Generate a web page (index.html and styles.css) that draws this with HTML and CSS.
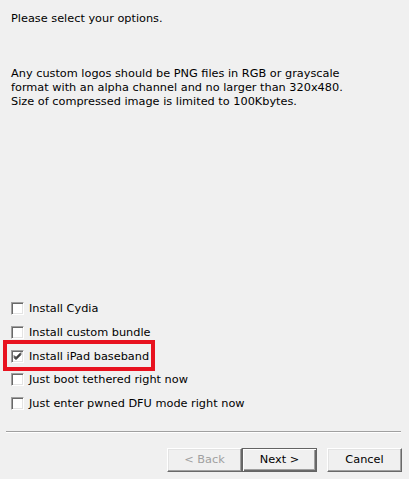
FILE: index.html
```html
<!DOCTYPE html>
<html>
<head>
<meta charset="utf-8">
<link rel="stylesheet" href="styles.css">
</head>
<body>
<div class="wizard">
  <div class="content">
    <p class="title">Please select your options.</p>
    <p class="info">Any custom logos should be PNG files in RGB or grayscale<br>format with an alpha channel and no larger than 320x480.<br>Size of compressed image is limited to 100Kbytes.</p>
    <div class="options">
      <div class="row"><span class="box"></span><span class="label">Install Cydia</span></div>
      <div class="row"><span class="box"></span><span class="label">Install custom bundle</span></div>
      <div class="row highlight"><span class="box checked"><svg width="9" height="9" viewBox="0 0 9 9"><path d="M1 3.5 L3 5.5 L8 0.5 M1 4.5 L3 6.5 L8 1.5 M1 5.5 L3 7.5 L8 2.5" fill="none" stroke="#000" stroke-width="1"/></svg></span><span class="label">Install iPad baseband</span></div>
      <div class="row"><span class="box"></span><span class="label">Just boot tethered right now</span></div>
      <div class="row"><span class="box"></span><span class="label">Just enter pwned DFU mode right now</span></div>
    </div>
  </div>
  <div class="separator"></div>
  <div class="buttons">
    <div class="btn disabled">&lt; Back</div>
    <div class="btn default">Next &gt;</div>
    <div class="btn cancel">Cancel</div>
  </div>
</div>
</body>
</html>
```
FILE: styles.css
```css
html, body {
  margin: 0;
  padding: 0;
  background: #f0f0f0;
}
.wizard {
  width: 409px;
  height: 479px;
  font-family: "DejaVu Sans", Verdana, sans-serif;
  font-size: 11.3px;
  color: #000;
  overflow: hidden;
}
.content {
  padding-left: 11px;
}
.title {
  margin: 0;
  padding-top: 12px;
  line-height: 14px;
}
.info {
  margin: 41px 0 0 0;
  line-height: 14px;
}
.options {
  margin-top: 188px;
}
.row {
  position: relative;
  width: fit-content;
  height: 23.75px;
  display: flex;
  align-items: flex-start;
}
.box {
  box-sizing: border-box;
  width: 13px;
  height: 13px;
  margin-top: 5px;
  background: #fff;
  border: 1px solid;
  border-color: #a0a0a0 #ffffff #ffffff #a0a0a0;
  box-shadow: inset 1px 1px #696969, inset -1px -1px #e3e3e3;
  display: flex;
  align-items: center;
  justify-content: center;
}
.box svg {
  display: block;
}
.label {
  margin-left: 5px;
  line-height: 13px;
  margin-top: 5px;
  white-space: nowrap;
}
.highlight::after {
  content: "";
  position: absolute;
  left: -8px;
  right: -6px;
  top: -5px;
  height: 31px;
  box-sizing: border-box;
  border: 4px solid #e8121f;
}
.separator {
  margin: 15px 8px 0 6px;
  border-top: 1px solid #a0a0a0;
  border-bottom: 1px solid #ffffff;
}
.buttons {
  margin-top: 15px;
  padding-right: 7px;
  display: flex;
  justify-content: flex-end;
}
.btn {
  box-sizing: border-box;
  width: 75px;
  height: 24px;
  display: flex;
  align-items: center;
  justify-content: center;
  background: #f0f0f0;
  border: 1px solid;
  border-color: #ffffff #696969 #696969 #ffffff;
  box-shadow: inset -1px -1px #a0a0a0, inset 1px 1px #e3e3e3;
}
.btn.disabled {
  color: #a0a0a0;
}
.btn.default {
  border-color: #646464;
  box-shadow: inset 1px 1px #ffffff, inset -1px -1px #696969, inset -2px -2px #a0a0a0;
}
.btn.cancel {
  margin-left: 10px;
}
```
